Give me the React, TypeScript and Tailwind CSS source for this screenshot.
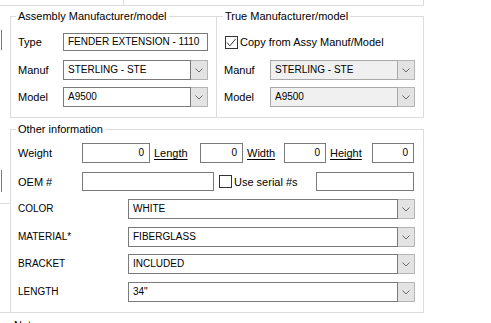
import React from 'react';

// Win-forms style "part details" panel

function Chevron() {
  return (
    <svg width="8" height="5" viewBox="0 0 8 5" fill="none">
      <path d="M0.5 0.5 L4 4 L7.5 0.5" stroke="#6a6a6a" strokeWidth="1" />
    </svg>
  );
}

function CheckBox({ checked = false }: { checked?: boolean }) {
  return (
    <div className="w-[13px] h-[13px] shrink-0 border border-[#333333] bg-white flex items-center justify-center">
      {checked && (
        <svg width="11" height="11" viewBox="0 0 11 11" fill="none">
          <path d="M1 5.5 L3.8 8.8 L9.8 1.8" stroke="#333333" strokeWidth="1" />
        </svg>
      )}
    </div>
  );
}

interface ComboProps {
  value: string;
  width: string;
  disabled?: boolean;
}

function Combo({ value, width, disabled = false }: ComboProps) {
  return (
    <div className={`flex h-[20px] shrink-0 ${width}`}>
      <div
        className={`flex-1 flex items-center pl-[4px] border text-[10px] ${
          disabled ? 'bg-[#f0f0f0] border-[#a8a8a8]' : 'bg-white border-[#7a7a7a]'
        }`}
      >
        {value}
      </div>
      <div className="w-[17px] flex items-center justify-center bg-[#e3e3e3] border border-l-0 border-[#b4b4b4]">
        <Chevron />
      </div>
    </div>
  );
}

function TextBox({ value = '', width, right = false, height = 'h-[20px]' }: { value?: string; width: string; right?: boolean; height?: string }) {
  return (
    <div
      className={`${width} ${height} shrink-0 border border-[#7a7a7a] bg-white flex items-center text-[10px] ${
        right ? 'justify-end pr-[5px]' : 'pl-[4px]'
      }`}
    >
      {value}
    </div>
  );
}

export default function App() {
  const attributes = [
    { label: 'COLOR', value: 'WHITE', mt: 'mt-[8px]' },
    { label: 'MATERIAL*', value: 'FIBERGLASS', mt: 'mt-[8px]' },
    { label: 'BRACKET', value: 'INCLUDED', mt: 'mt-[7px]' },
    { label: 'LENGTH', value: '34"', mt: 'mt-[8px]' }
  ];

  return (
    <div className="w-[491px] h-[323px] overflow-hidden bg-white text-black font-['Liberation_Sans',Arial,sans-serif] text-[11px] leading-[14px]">
      {/* bottom of the panels above */}
      <div className="flex h-[6px]">
        <div className="w-[124px] border-r border-b border-[#dcdcdc]" />
        <div className="w-[300px] border-r border-b border-[#dcdcdc]" />
      </div>

      <div className="flex">
        {/* left edge of neighbouring panel */}
        <div className="w-[10px] flex flex-col shrink-0">
          <div className="h-[24px]" />
          <div className="h-[20px] w-[2px] border-r border-[#7a7a7a]" />
          <div className="h-[120px]" />
          <div className="h-[22px] w-[2px] border-r border-[#7a7a7a]" />
          <div className="h-[12px] border-b border-[#dcdcdc]" />
          <div className="h-[109px] border-b border-[#dcdcdc]" />
        </div>

        <div className="flex flex-col">
          <div className="flex mt-[3px]">
            {/* Assembly */}
            <fieldset className="w-[207px] border border-[#dcdcdc] pl-[7px] pb-[10px]">
              <legend className="-ml-[2px] px-[2px] leading-[14px]">Assembly Manufacturer/model</legend>
              <div className="flex items-center h-[18px] mt-[10px]">
                <span className="w-[45px]">Type</span>
                <TextBox value="FENDER EXTENSION - 1110" width="w-[145px]" height="h-[18px]" />
              </div>
              <div className="flex items-center mt-[9px]">
                <span className="w-[45px]">Manuf</span>
                <Combo value="STERLING - STE" width="w-[145px]" />
              </div>
              <div className="flex items-center mt-[7px]">
                <span className="w-[45px]">Model</span>
                <Combo value="A9500" width="w-[145px]" />
              </div>
            </fieldset>

            {/* True */}
            <fieldset className="w-[207px] border border-l-0 border-[#dcdcdc] pl-[7px] pb-[10px]">
              <legend className="-ml-[1px] px-[2px] leading-[14px]">True Manufacturer/model</legend>
              <div className="flex items-center h-[18px] mt-[10px] pl-[1px] gap-[2px]">
                <CheckBox checked />
                <span>Copy from Assy Manuf/Model</span>
              </div>
              <div className="flex items-center mt-[9px]">
                <span className="w-[46px]">Manuf</span>
                <Combo value="STERLING - STE" width="w-[145px]" disabled />
              </div>
              <div className="flex items-center mt-[7px]">
                <span className="w-[46px]">Model</span>
                <Combo value="A9500" width="w-[145px]" disabled />
              </div>
            </fieldset>
          </div>

          {/* Other information */}
          <fieldset className="w-[414px] mt-[4px] border border-[#dcdcdc] pl-[7px] pb-[10px]">
            <legend className="-ml-[2px] px-[2px] leading-[14px]">Other information</legend>
            <div className="flex items-center mt-[7px]">
              <span className="w-[64px]">Weight</span>
              <TextBox value="0" width="w-[68px]" right />
              <span className="ml-[4px] w-[46px] underline underline-offset-2">Length</span>
              <TextBox value="0" width="w-[43px]" right />
              <span className="ml-[4px] w-[37px] underline underline-offset-2">Width</span>
              <TextBox value="0" width="w-[42px]" right />
              <span className="ml-[4px] w-[42px] underline underline-offset-2">Height</span>
              <TextBox value="0" width="w-[42px]" right />
            </div>
            <div className="flex items-center mt-[9px]">
              <span className="w-[64px]">OEM #</span>
              <TextBox width="w-[132px]" height="h-[19px]" />
              <div className="ml-[5px]">
                <CheckBox />
              </div>
              <span className="ml-[2px] w-[82px]">Use serial #s</span>
              <TextBox width="w-[98px]" height="h-[19px]" />
            </div>
            {attributes.map(a => (
              <div key={a.label} className={`flex items-center ${a.mt}`}>
                <span className="w-[110px] text-[10px]">{a.label}</span>
                <Combo value={a.value} width="w-[287px]" />
              </div>
            ))}
          </fieldset>

          <div className="pl-[4px] pt-[5px]">Notes</div>
        </div>
      </div>
    </div>
  );
}
